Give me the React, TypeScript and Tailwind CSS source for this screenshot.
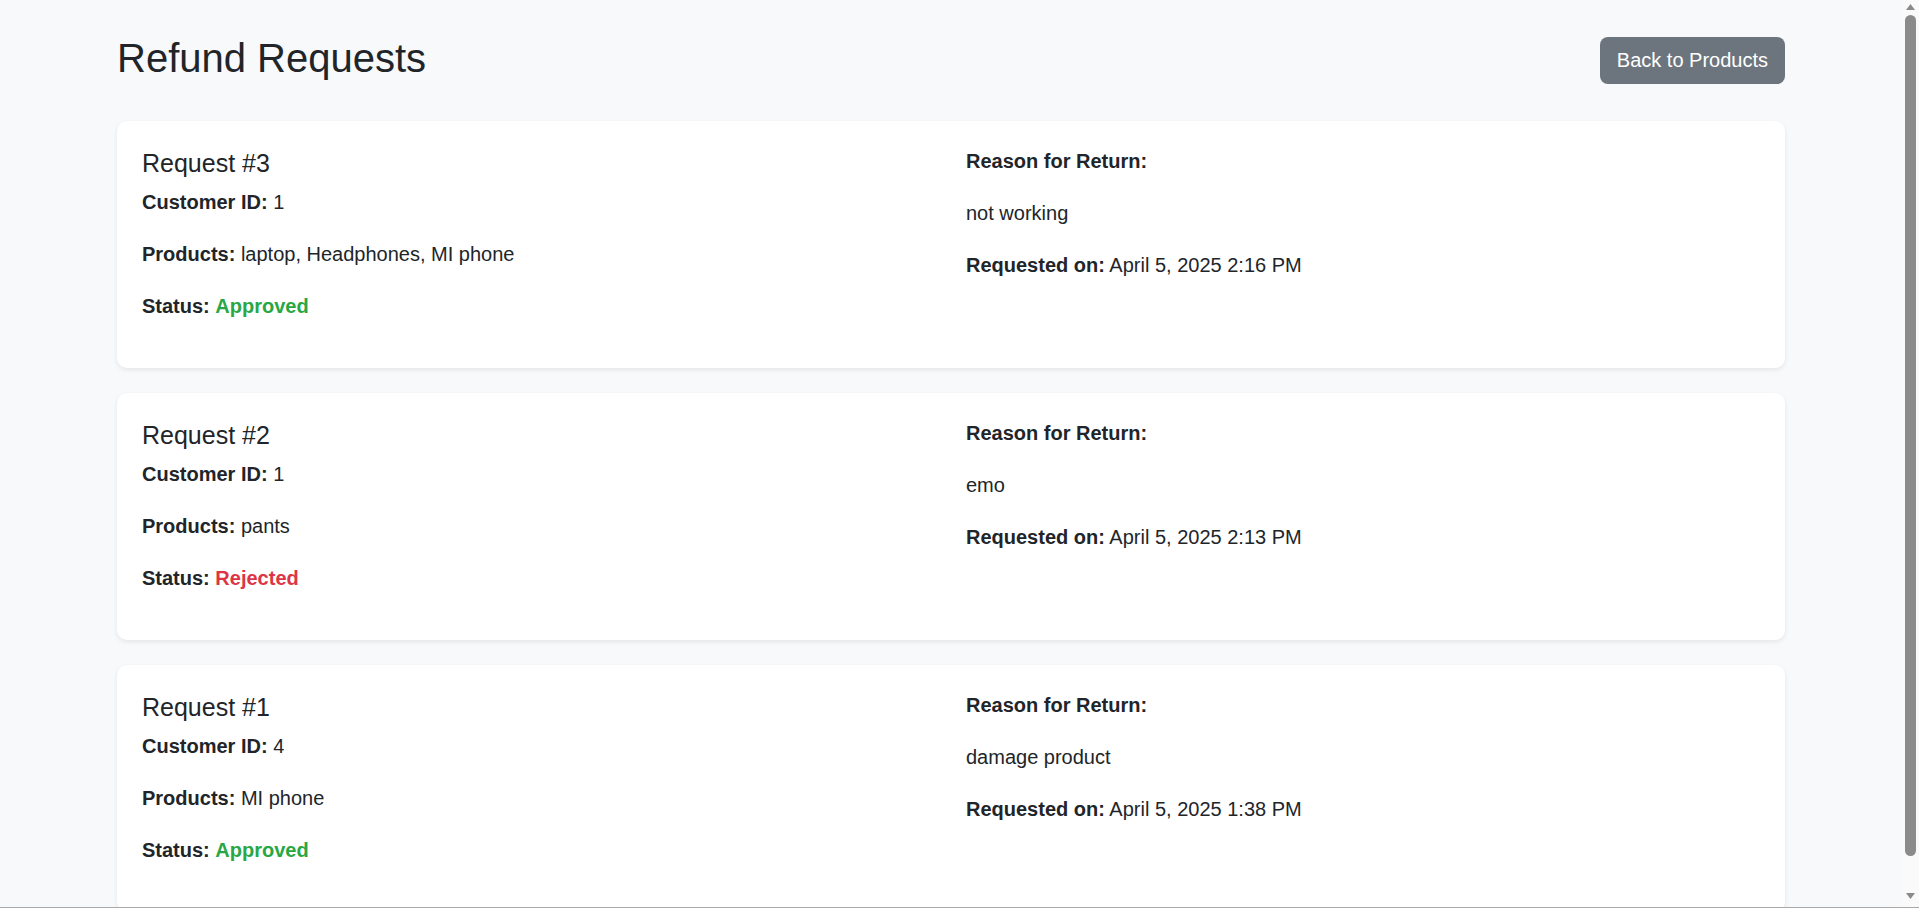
import React from "react";

type Req = {
  id: number;
  customer: number;
  products: string;
  status: "Approved" | "Rejected";
  reason: string;
  date: string;
};

const requests: Req[] = [
  { id: 3, customer: 1, products: "laptop, Headphones, MI phone", status: "Approved", reason: "not working", date: "April 5, 2025 2:16 PM" },
  { id: 2, customer: 1, products: "pants", status: "Rejected", reason: "emo", date: "April 5, 2025 2:13 PM" },
  { id: 1, customer: 4, products: "MI phone", status: "Approved", reason: "damage product", date: "April 5, 2025 1:38 PM" },
];

function Card({ r }: { r: Req }) {
  return (
    <div className="bg-white rounded-[10px] shadow-[0_2px_5px_rgba(0,0,0,0.08)] px-[25px] py-[25px]">
      <div className="grid grid-cols-2 gap-x-[30px]">
        <div>
          <h5 className="text-[25px] leading-[34px] font-medium mb-[7px]">Request #{r.id}</h5>
          <p className="text-[20px] leading-[30px] mb-[22px]">
            <strong className="font-bold">Customer ID:</strong> {r.customer}
          </p>
          <p className="text-[20px] leading-[30px] mb-[22px]">
            <strong className="font-bold">Products:</strong> {r.products}
          </p>
          <p className="text-[20px] leading-[30px] mb-[22px]">
            <strong className="font-bold">Status:</strong>{" "}
            {r.status === "Approved" ? (
              <span className="font-bold text-[#28a745]">Approved</span>
            ) : (
              <span className="font-bold text-[#dc3545]">Rejected</span>
            )}
          </p>
        </div>
        <div>
          <p className="text-[20px] leading-[30px] mb-[22px]">
            <strong className="font-bold">Reason for Return:</strong>
          </p>
          <p className="text-[20px] leading-[30px] mb-[22px]">{r.reason}</p>
          <p className="text-[20px] leading-[30px] mb-[22px]">
            <strong className="font-bold">Requested on:</strong> {r.date}
          </p>
        </div>
      </div>
    </div>
  );
}

function FakeScrollbar() {
  return (
    <div className="fixed top-0 right-0 h-screen w-[17px] bg-[#fafafa] flex flex-col items-center">
      <svg width="11" height="8" viewBox="0 0 11 8" className="mt-[3px]">
        <polygon points="5.5,1 10,7 1,7" fill="#8a8a8a" />
      </svg>
      <div className="mt-[4px] w-[11px] flex-1 rounded-full bg-[#8b8b8b]" />
      <svg width="11" height="8" viewBox="0 0 11 8" className="mt-[36px] mb-[8px]">
        <polygon points="1,1 10,1 5.5,7" fill="#8a8a8a" />
      </svg>
    </div>
  );
}

export default function App() {
  return (
    <div
      className="min-h-screen bg-[#f8f9fa] text-[#212529] pr-[17px]"
      style={{ fontFamily: '"Liberation Sans", Arial, sans-serif' }}
    >
      <div className="max-w-[1668px] mx-auto pt-[34px] pb-[30px]">
        <div className="flex items-center justify-between mb-[35px]">
          <h2 className="text-[40px] leading-[48px] font-medium mb-[4px]">Refund Requests</h2>
          <button className="h-[47px] px-[17px] rounded-[8px] bg-[#6c757d] text-white text-[20px] leading-[30px]">
            Back to Products
          </button>
        </div>
        <div className="flex flex-col gap-[25px]">
          {requests.map((r) => (
            <Card key={r.id} r={r} />
          ))}
        </div>
      </div>
      <FakeScrollbar />
      <div className="fixed bottom-0 left-0 w-full h-px bg-[#a9a9a9]" />
    </div>
  );
}
